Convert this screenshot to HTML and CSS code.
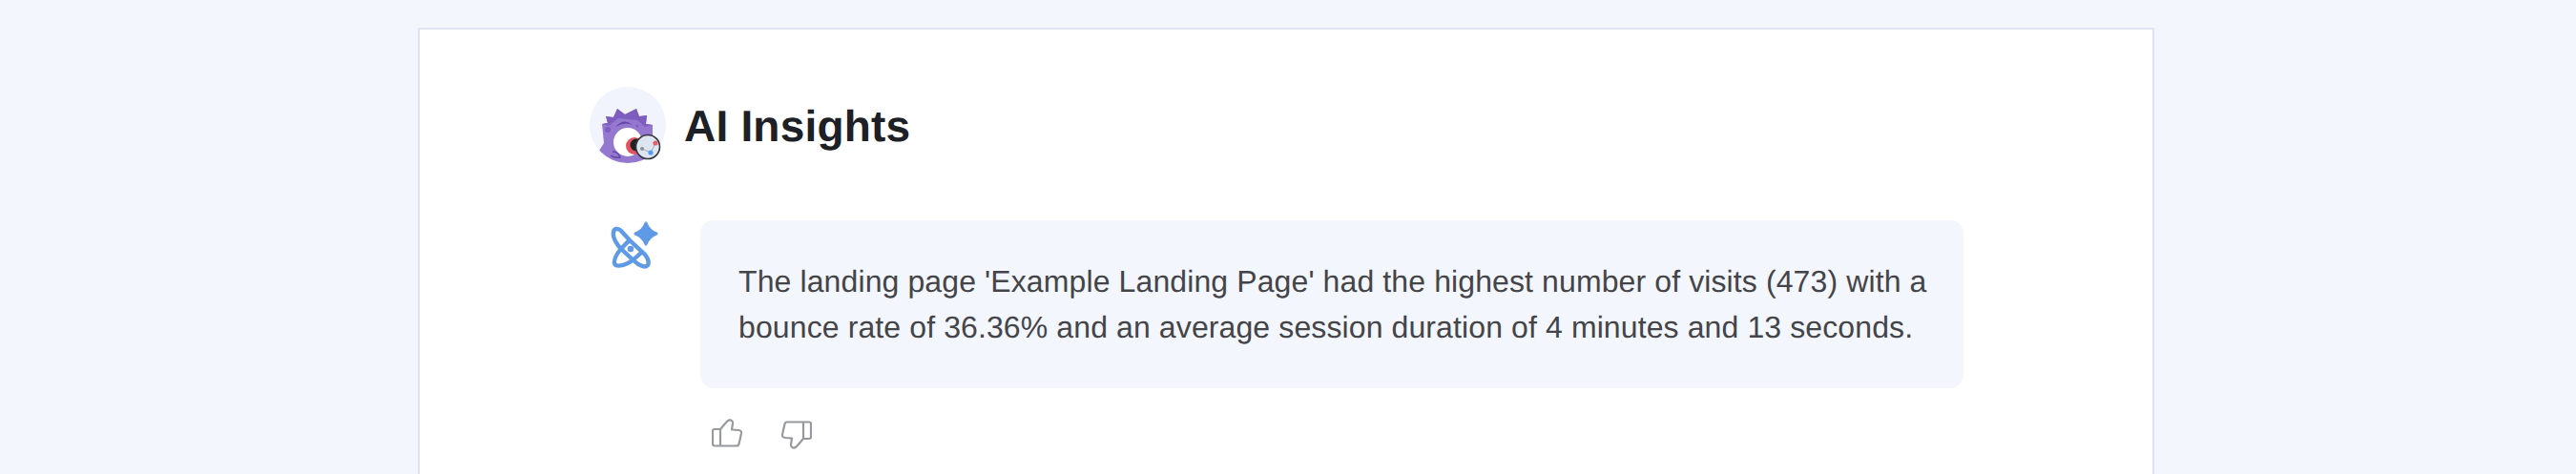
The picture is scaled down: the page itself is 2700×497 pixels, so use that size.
FILE: index.html
```html
<!DOCTYPE html>
<html lang="en">
<head>
  <meta charset="UTF-8" />
  <meta name="viewport" content="width=device-width, initial-scale=1.0"/>
  <title>AI Insights</title>
  <link rel="stylesheet" href="styles.css">
</head>
<body>
  <div class="card">
    <div class="header">
      <svg class="avatar" viewBox="0 0 80 80">
        <defs><clipPath id="avatarClip"><circle cx="40" cy="40" r="40"/></clipPath></defs>
        <circle cx="40" cy="40" r="40" fill="#f1f3fd"/>
        <g clip-path="url(#avatarClip)">
          <path d="M10 67 15 59 13 39 19 38 17 31 25 32 29 23 37 29 49 23 52 31 60 30 59 39 66 40 66 54 62 80 6 80Z" fill="#9478d0"/>
          <path d="M13 39 19 38 17 31 25 32 29 23 37 29 49 23 52 31 60 30 59 39 66 40 58 42 50 35 30 33 20 41Z" fill="#7d5dbd"/>
          <path d="M27 42q9-10 18-2q-9-4-18 2Z" fill="#6344a6"/>
          <circle cx="19" cy="45" r="3" fill="#7d5dbd"/>
          <circle cx="50" cy="41" r="1.5" fill="#7d5dbd"/>
          <path d="M24 68q6 0 8 6q-6 1-10-2" fill="none" stroke="#6344a6" stroke-width="1.5"/>
          <circle cx="40" cy="58" r="15" fill="#fff"/>
          <circle cx="47" cy="62" r="9" fill="#e0535f"/>
          <circle cx="49" cy="61" r="6.5" fill="#222226"/>
        </g>
        <circle cx="61" cy="63" r="12.5" fill="#dde5f0" stroke="#35363b" stroke-width="1.6"/>
        <path d="M55 65 64 69 69 59" fill="none" stroke="#a5abb5" stroke-width="1"/>
        <circle cx="69" cy="59" r="2.6" fill="#e2606a"/>
        <circle cx="55" cy="65" r="2" fill="#8b8f98"/>
        <circle cx="64" cy="69" r="2.6" fill="#5b9bea"/>
      </svg>
      <h1 class="title">AI Insights</h1>
    </div>

    <div class="message">
      <div class="message-icon">
        <svg class="spark" viewBox="0 0 52 51">
          <path d="M39 2Q42 10 50 13 42 16 39 24 36 16 28 13 36 10 39 2Z" fill="#5f9ae6" stroke="#5f9ae6" stroke-width="3" stroke-linejoin="round"/>
          <path d="M5 12C5 7 10 7 13 10L22 20 35 32C40 36 43 42 41 46 39 49 32 47 26 41L12 28C7 22 4 17 5 12Z" fill="none" stroke="#5f9ae6" stroke-width="4.4"/>
          <path d="M22 20C14 27 5 37 6 44 7 48 14 47 20 44 26 41 32 35 36 31" fill="none" stroke="#5f9ae6" stroke-width="4.4"/>
          <circle cx="23" cy="29" r="3.3" fill="#5f9ae6"/>
        </svg>
      </div>
      <div class="bubble">The landing page 'Example Landing Page' had the highest number of visits (473) with a bounce rate of 36.36% and an average session duration of 4 minutes and 13 seconds.</div>
    </div>

    <div class="feedback">
      <svg class="thumb" viewBox="0 0 32 32"><path d="M9 11 15.5 3.500Q17.500 1 20 1.500 22.500 2.500 22 5L21 11.500 28 12Q31.500 12.500 31 15.500L28.500 26.500Q28 28.500 26 28.500H3Q1 28.500 1 26.500V13Q1 11 3 11H9ZM9 11V28.500"/></svg>
      <svg class="thumb thumb-down" viewBox="0 0 32 32"><path d="M9 11 15.5 3.500Q17.500 1 20 1.500 22.500 2.500 22 5L21 11.500 28 12Q31.500 12.500 31 15.500L28.500 26.500Q28 28.500 26 28.500H3Q1 28.500 1 26.500V13Q1 11 3 11H9ZM9 11V28.500"/></svg>
    </div>
  </div>
</body>
</html>
```

FILE: styles.css
```css
html, body {
  height: 100%;
}

body {
  margin: 0;
  padding: 29px 442px 0 438px;
  background: #f4f6fe;
  font-family: "Liberation Sans", Arial, sans-serif;
  overflow: hidden;
  text-rendering: geometricPrecision;
}

.card {
  background: #fff;
  border: 2px solid #dde3f3;
  padding: 60px 0 60px 178px;
}

.header {
  display: flex;
  align-items: center;
  gap: 19px;
  margin-bottom: 60px;
}

.avatar {
  width: 80px;
  height: 80px;
  flex: none;
}

.title {
  margin: 0;
  padding-top: 2px;
  font-size: 46px;
  letter-spacing: 0.2px;
  line-height: 78px;
  font-weight: bold;
  color: #1d2025;
}

.message {
  display: flex;
}

.message-icon {
  width: 116px;
  flex: none;
  padding: 1px 0 0 20px;
  box-sizing: border-box;
}

.spark {
  display: block;
  width: 52px;
  height: 51px;
}

.bubble {
  width: 1324px;
  box-sizing: border-box;
  padding: 40px 24px 40px 40px;
  background: #f4f6fe;
  border-radius: 14px;
  font-size: 32px;
  letter-spacing: 0.11px;
  line-height: 48px;
  color: #444548;
}

.feedback {
  display: flex;
  gap: 41px;
  margin: 32px 0 0 128px;
}

.thumb {
  width: 32px;
  height: 32px;
  fill: none;
  stroke: #97999f;
  stroke-width: 2.2;
  stroke-linejoin: round;
}

.thumb-down {
  transform: rotate(180deg);
}
```
